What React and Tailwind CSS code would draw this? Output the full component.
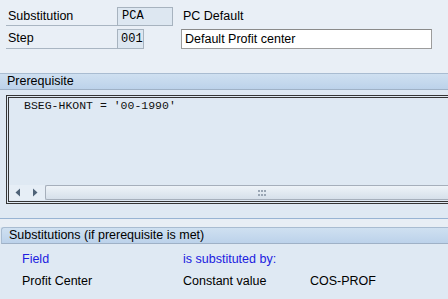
const font = { fontFamily: '"Liberation Sans", Arial, sans-serif' }

const SectionHeader = ({ title, rounded }) => (
  <div
    className={`h-[17px] flex items-center pl-[7px] border-t border-b border-t-[#a9bcd1] border-b-[#9fb1c6] bg-gradient-to-b from-[#cfe0f1] to-[#bcd2ea] text-[12.5px] text-black ${
      rounded ? 'ml-[1px] rounded-tl-[3px] border-l border-l-[#a9bcd1]' : ''
    }`}
  >
    {title}
  </div>
)

const ArrowLeft = () => (
  <svg width="6" height="9" viewBox="0 0 6 9">
    <path d="M5 0.5 L0.5 4.5 L5 8.5 Z" fill="#4f6378" />
  </svg>
)

const ArrowRight = () => (
  <svg width="6" height="9" viewBox="0 0 6 9">
    <path d="M1 0.5 L5.5 4.5 L1 8.5 Z" fill="#4f6378" />
  </svg>
)

const App = () => {
  return (
    <div className="w-[448px] h-[299px] overflow-hidden bg-[#dfe9f3] flex flex-col" style={font}>
      {/* header fields */}
      <div className="h-[73px] bg-[#e9eff6] pt-[7px] text-[12.5px] text-black">
        <div className="flex items-end h-[19px]">
          <div className="ml-[6px] w-[111px] h-[19px] pl-[2px] border-b border-[#a9b5c2] leading-[18px]">
            Substitution
          </div>
          <div
            className="w-[56px] h-[19px] border border-[#a7b3bf] bg-[#dde7f1] pl-[4px] text-[12px] leading-[17px]"
            style={{ fontFamily: '"Liberation Mono", "Courier New", monospace' }}
          >
            PCA
          </div>
          <div className="ml-[10px] h-[19px] leading-[19px]">PC Default</div>
        </div>
        <div className="flex items-end h-[20px] mt-[3px]">
          <div className="ml-[6px] w-[111px] h-[20px] pl-[2px] border-b border-[#a9b5c2] leading-[19px]">
            Step
          </div>
          <div
            className="w-[27px] h-[20px] border border-[#a7b3bf] bg-[#dde7f1] pl-[3px] text-[12px] leading-[18px]"
            style={{ fontFamily: '"Liberation Mono", "Courier New", monospace' }}
          >
            001
          </div>
          <div className="ml-[37px] w-[251px] h-[20px] border border-[#9c9c9c] border-t-[#8a8a8a] bg-white pl-[3px] leading-[18px]">
            Default Profit center
          </div>
        </div>
      </div>

      <SectionHeader title="Prerequisite" />

      {/* prerequisite editor */}
      <div className="h-[128px] pt-[5px]">
        <div className="ml-[6px] h-[109px] border-[3px] border-double border-r-0 border-[#353535] bg-[#dfe9f3] flex flex-col">
          <div
            className="flex-1 pl-[15px] pt-[1px] text-[11.5px] leading-[14px] text-[#111]"
            style={{ fontFamily: '"Liberation Mono", "Courier New", monospace' }}
          >
            BSEG-HKONT = '00-1990'
          </div>
          <div className="h-[15px] mb-[1px] flex">
            <div className="w-[36px] flex items-center bg-[#e6eef6]">
              <div className="w-[17px] flex justify-center">
                <ArrowLeft />
              </div>
              <div className="w-[17px] flex justify-center">
                <ArrowRight />
              </div>
            </div>
            <div className="flex-1 border border-r-0 border-[#a6afbb] rounded-l-[2px] bg-gradient-to-b from-[#eef3f8] to-[#d6e0ea] flex items-center">
              <div className="ml-[212px] grid grid-cols-3 gap-x-[1px] gap-y-[2px]">
                {Array.from({ length: 6 }).map((_, i) => (
                  <div key={i} className="w-[2px] h-[2px] bg-[#9aa6b4]" />
                ))}
              </div>
            </div>
          </div>
        </div>
      </div>

      <div className="h-[9px] border-t border-[#98b4d3] bg-[#e8eef5]" />

      <SectionHeader title="Substitutions (if prerequisite is met)" rounded />

      {/* substitution rows */}
      <div className="pt-[4px] text-[12.5px]">
        <div className="h-[22px] flex items-center text-[#2020e0]">
          <div className="ml-[22px] w-[161px]">Field</div>
          <div>is substituted by:</div>
        </div>
        <div className="h-[22px] flex items-center text-black">
          <div className="ml-[22px] w-[161px]">Profit Center</div>
          <div className="w-[127px]">Constant value</div>
          <div>COS-PROF</div>
        </div>
      </div>
    </div>
  )
}

export default App
